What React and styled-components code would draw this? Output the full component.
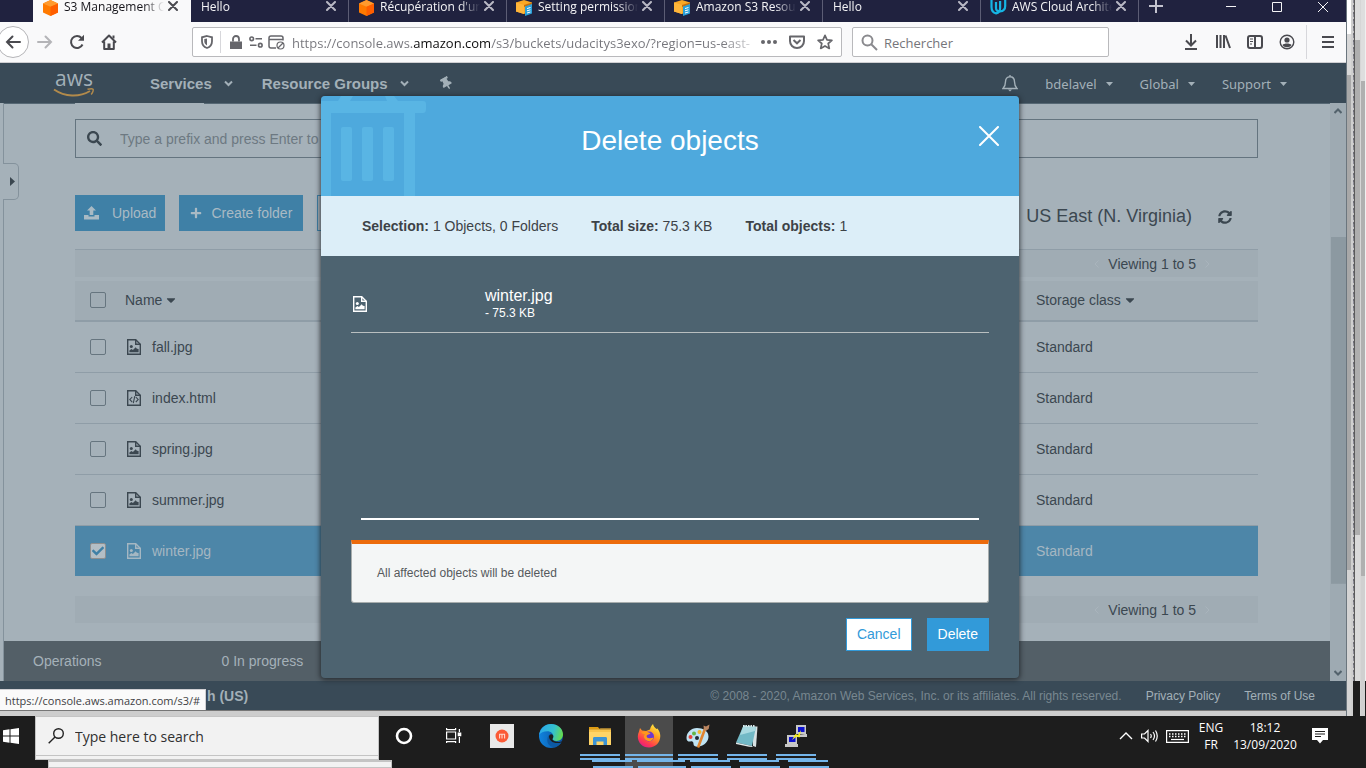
import React from "react";
import styled, { createGlobalStyle, css } from "styled-components";
import { FaSearch, FaPlus, FaCaretDown, FaCheck, FaSyncAlt, FaThumbtack } from "react-icons/fa";

const sans = '"Liberation Sans", Arial, sans-serif';
const system = '"Open Sans", "Noto Sans", sans-serif';
const ink = "#3b4750";
const rule = "#8f9da7";

const GlobalStyle = createGlobalStyle`
  *, *::before, *::after { box-sizing: border-box; }
  body { margin: 0; background: #1d1d1d; font-family: ${sans}; font-size: 14px; color: ${ink}; overflow: hidden; }
  button { padding: 0; border: 0; background: none; color: inherit; font: inherit; cursor: pointer; }
  a { color: inherit; text-decoration: none; }
  input { font: inherit; }
  svg { display: block; flex: none; }
  h2, p { margin: 0; font-weight: normal; }
`;

/* ---------- shared icon frame ---------- */

const Icon = ({ w = 16, h = w, box = `0 0 ${w} ${h}`, sw = 2, children, ...rest }) => (
  <svg width={w} height={h} viewBox={box} fill="none" stroke="currentColor" strokeWidth={sw} aria-hidden="true" {...rest}>
    {children}
  </svg>
);

const Cross = ({ size = 10, sw = 2 }) => (
  <Icon w={size} sw={sw} strokeLinecap="round">
    <path d={`M1 1 ${size - 1} ${size - 1}M${size - 1} 1 1 ${size - 1}`} />
  </Icon>
);

const Chevron = () => (
  <Icon w={9} h={7} sw={2}>
    <path d="M1 1.5 4.5 5 8 1.5" />
  </Icon>
);

const Triangle = () => (
  <Icon w={7} h={4} stroke="none" fill="currentColor">
    <path d="M0 0h7L3.5 4z" />
  </Icon>
);

const FileIcon = ({ kind }) => (
  <Icon w={14} h={16} sw={1.4}>
    <path d="M.7.7h8l4.6 4.6v10H.7z" />
    <path d="M8.7.7v4.6h4.6" />
    {kind === "html" ? (
      <path d="M5.2 7 2.8 9.6l2.4 2.4M8.8 7l2.4 2.6L8.8 12M7.8 6.2l-1.5 7" strokeWidth="1.1" />
    ) : (
      <g fill="currentColor" stroke="none">
        <circle cx="4.3" cy="7.4" r="1.5" />
        <path d="M2.4 13.2v-1.7l2-1.6 1.5 1 2.8-2.7 1.2 1.6 1.7.3v3.1z" />
      </g>
    )}
  </Icon>
);

const Cube = () => (
  <Icon w={17} h={16} stroke="none">
    <path d="M8.5 0 16 3.4v9L8.5 16 1 12.4v-9z" fill="#ff7a00" />
    <path d="M8.5 0 16 3.4 8.5 6.8 1 3.4z" fill="#ff9a2e" />
    <path d="M8.5 6.8 16 3.4v9L8.5 16z" fill="#ff5e00" />
  </Icon>
);

const DocsCube = () => (
  <Icon w={17} h={16} stroke="none">
    <path d="M8 0 16 2.6v8L8 14 0 11.5v-9z" fill="#f9a825" />
    <path d="M0 2.5 8 5v9L0 11.5z" fill="#ffb53a" />
    <path d="M8 5l8-2.4v2L8 7z" fill="#c46d0d" />
    <path d="M9 6.5 16 4v9.5L9 16z" fill="#2a9fd8" />
    <path d="M11 8.5l3.5-1M11 10.8l3.5-1M11 13l3.5-1" stroke="#fff" strokeWidth="1" />
  </Icon>
);

const UdacityMark = () => (
  <Icon w={17} h={16} sw={2.2} stroke="#16b5e4">
    <path d="M1.500 0v7c0 3.600 1.800 5.800 4.600 6.300 2.800-.5 4-2.300 4-5.300V1" />
    <path d="M6 2v6c0 2.400 1.400 3.600 4 3.400 3.200-.3 5.200-2 5.200-5.400V0" />
  </Icon>
);

/* ---------- desktop frame ---------- */

const Desktop = styled.div`
  display: flex;
  flex-direction: column;
  min-height: 100vh;
`;
const Stage = styled.div`
  flex: 1;
  display: flex;
`;
const Browser = styled.div`
  flex: 1;
  min-width: 0;
  display: flex;
  flex-direction: column;
  border-right: 1px solid #6b767e;
`;
const WindowShadow = styled.div`
  height: 6px;
  border-top: 1px solid #767676;
  background: #cdcdcd;
`;
const StackedEdges = styled.div`
  display: flex;
  align-items: flex-start;
  align-self: stretch;
  background: #1d1d1d;
`;
const Edge = styled.div`
  width: ${(p) => p.$w}px;
  align-self: stretch;
  margin-bottom: ${(p) => p.$up || 0}px;
  background: ${(p) => p.$bg};
`;

const edges = [
  { w: 4, bg: "linear-gradient(#fff 0 34px, #d8d8d8 34px 75px, #a8a8a8 75px 570px, #d4d4d4 570px)" },
  { w: 2, bg: "#cfcfcf" },
  { w: 1, up: 35, bg: "repeating-linear-gradient(#8b8b95 0 3px, #c6c6c6 3px 5px, #6f6f78 5px 7px)" },
  { w: 1, up: 35, bg: "#5a5a5a" },
  { w: 5, up: 35, bg: "linear-gradient(#dcdcdc 0 40px, #aeaeae 40px 535px, #dadada 535px)" },
  { w: 1, up: 0, bg: "#d6d6d6" },
  { w: 4, up: 0, bg: "linear-gradient(#dedede 0 81px, #b0b0b0 81px 576px, #d0d0d0 576px)" },
  { w: 1, up: 35, bg: "#f0f0f0" },
];

/* ---------- browser tabs ---------- */

const TabStrip = styled.header`
  display: flex;
  height: 22px;
  padding-left: 33px;
  background: #20223f;
  color: #f4f4f6;
  font: 12px/14px ${system};
`;
const Tab = styled.div`
  flex: 0 1 158px;
  min-width: 0;
  display: flex;
  align-items: flex-start;
  padding: 0 12px 0 9px;
  border-right: 1px solid ${(p) => (p.$active ? "transparent" : "#5c5d75")};
  color: ${(p) => (p.$active ? "#15141a" : "#f4f4f6")};
  background: ${(p) => (p.$active ? "#f9f9fa" : "none")};
`;
const TabTitle = styled.span`
  flex: 1;
  min-width: 0;
  margin: 0 4px 0 ${(p) => (p.$icon ? 5 : 1)}px;
  white-space: nowrap;
  mask-image: linear-gradient(to right, #000 calc(100% - 20px), transparent);
`;
const TabClose = styled.button`
  margin: 1px 0 0;
  color: ${(p) => (p.$active ? "#4a4a4f" : "#b9b9c4")};
`;
const NewTab = styled.button`
  width: 34px;
  height: 14px;
  display: grid;
  place-items: center;
  color: #c3c3cf;
`;
const WindowControls = styled.div`
  display: flex;
  margin-left: auto;
`;
const WindowButton = styled.button`
  width: 46px;
  height: 14px;
  display: grid;
  place-items: center;
`;

const tabs = [
  { title: "S3 Management C", icon: Cube, active: true },
  { title: "Hello" },
  { title: "Récupération d'un", icon: Cube },
  { title: "Setting permission", icon: DocsCube },
  { title: "Amazon S3 Resour", icon: DocsCube },
  { title: "Hello" },
  { title: "AWS Cloud Archite", icon: UdacityMark },
];

/* ---------- browser toolbar ---------- */

const Toolbar = styled.div`
  display: flex;
  align-items: center;
  height: 41px;
  padding-right: 2px;
  border-bottom: 1px solid #cfcfd2;
  background: #f9f9fa;
  color: #4a4a4f;
`;
const ToolButton = styled.button`
  width: 32px;
  height: 32px;
  display: grid;
  place-items: center;
  color: ${(p) => (p.$faint ? "#b4b4b7" : "inherit")};
`;
const BackButton = styled(ToolButton)`
  margin-left: -3px;
  border: 1px solid #b5b5b8;
  border-radius: 50%;
  background: #fff;
`;
const UrlBox = styled.div`
  flex: 636;
  display: flex;
  align-items: center;
  height: 30px;
  margin-left: 67px;
  padding: 0 6px;
  border: 1px solid #b9b9bc;
  border-radius: 2px;
  background: #fff;
  color: #66666b;
`;
const UrlGlyph = styled.span`
  display: grid;
  place-items: center;
  width: ${(p) => p.$w || 20}px;
`;
const UrlRule = styled.span`
  width: 1px;
  height: 22px;
  margin: 0 5px;
  background: #d7d7db;
`;
const UrlInput = styled.input`
  flex: 1;
  min-width: 0;
  margin-left: 6px;
  padding: 2px 0 0;
  border: 0;
  outline: 0;
  font: 13px/20px ${system};
  color: transparent;
  background: linear-gradient(to right, #75757b 121px, #0c0c0d 121px 199px, #75757b 199px 430px, #d8d8da 460px);
  background-clip: text;
`;
const FindBox = styled.label`
  flex: 239;
  display: flex;
  align-items: center;
  gap: 6px;
  height: 30px;
  margin: 0 66px 0 10px;
  padding: 0 8px;
  border: 1px solid #b9b9bc;
  border-radius: 2px;
  background: #fff;
  color: #8a8a8e;
`;
const FindInput = styled.input`
  flex: 1;
  min-width: 0;
  padding: 2px 0 0;
  border: 0;
  outline: 0;
  background: none;
  font: 13px/20px ${system};
  &::placeholder { color: #75757a; opacity: 1; }
`;
const ToolRule = styled.span`
  width: 1px;
  height: 34px;
  margin: 0 5px 0 3px;
  background: #d7d7db;
`;

/* ---------- AWS console header ---------- */

const Page = styled.div`
  position: relative;
  flex: 1;
  display: flex;
  flex-direction: column;
  background: #a5b1b9;
`;
const AwsHeader = styled.header`
  display: flex;
  align-items: center;
  height: 40px;
  padding: 1px 59px 0 53px;
  background: #394a57;
  color: #a3b0b8;
`;
const Logo = styled.a`
  width: 42px;
  height: 30px;
  margin-right: 55px;
  font: 500 21px/18px "Open Sans", sans-serif;
  text-align: center;
`;
const NavButton = styled.button`
  display: flex;
  align-items: center;
  gap: 12px;
  margin-right: ${(p) => p.$after || 29}px;
  font: bold 15px/20px ${sans};
`;
const AccountMenu = styled.nav`
  display: flex;
  align-items: center;
  gap: 27px;
  margin-left: auto;
`;
const AccountButton = styled.button`
  display: flex;
  align-items: center;
  gap: 9px;
  font: 13px/20px "Noto Sans", sans-serif;
`;

/* ---------- bucket page ---------- */

const Viewport = styled.div`
  flex: 1;
  display: flex;
`;
const Bucket = styled.main`
  position: relative;
  flex: 1;
  display: flex;
  flex-direction: column;
  margin-left: 3px;
  border-left: 1px solid #84929c;
`;
const TabRule = styled.div`
  display: grid;
  grid-template-columns: 71px 129px 1fr;
  height: 1px;
  & > i { background: #566874; }
  & > i:nth-child(2) { background: none; }
`;
const DrawerHandle = styled.button`
  position: absolute;
  left: -1px;
  top: 60px;
  width: 16px;
  height: 37px;
  border: 1px solid #84929c;
  border-left: 0;
  border-radius: 0 5px 5px 0;
  background: #a5b1b9;
  padding-left: 7px;
`;
const Sheet = styled.section`
  padding: 15px 72px 18px 71px;
`;
const PrefixBox = styled.label`
  display: flex;
  align-items: center;
  gap: 18px;
  height: 39px;
  padding: 0 11px;
  border: 1px solid #64747f;
`;
const PrefixInput = styled.input`
  flex: 1;
  padding: 0;
  border: 0;
  outline: 0;
  background: none;
  &::placeholder { color: #6d7982; opacity: 1; }
`;
const Actions = styled.div`
  display: flex;
  align-items: center;
  gap: 14px;
  margin: 37px 0 18px;
`;
const ActionButton = styled.button`
  display: flex;
  align-items: center;
  gap: ${(p) => p.$gap || 9}px;
  height: 36px;
  padding: 0 ${(p) => p.$pad || 11}px;
  background: #3f80a6;
  color: #a9bac4;
`;
const OutlineButton = styled(ActionButton)`
  width: 100px;
  border: 1px solid #3f80a6;
  background: none;
  color: #3f80a6;
`;
const Region = styled.span`
  margin-left: auto;
  font-size: 18px;
  line-height: 20px;
  padding-top: 6px;
`;
const RefreshButton = styled.button`
  margin: 8px 26px 0 12px;
`;
const Pager = styled.div`
  display: flex;
  align-items: center;
  justify-content: flex-end;
  gap: 9px;
  height: ${(p) => (p.$ruled ? 28 : 27)}px;
  margin: ${(p) => (p.$ruled ? "0 0 4px" : "20px 0 0")};
  padding-right: 48px;
  border-top: ${(p) => (p.$ruled ? `1px solid ${rule}` : "0")};
  background: #a0acb4;
`;
const PagerStep = styled.button`
  color: #a9b4bc;
`;
const ObjectTable = styled.table`
  width: 100%;
  table-layout: fixed;
  border-collapse: separate;
  border-spacing: 0;
  text-align: left;
`;
const HeadCell = styled.th`
  width: ${(p) => (p.$w ? `${p.$w}px` : "auto")};
  height: 41px;
  padding: 0 0 2px;
  border-bottom: 2px solid ${rule};
  background: #a0acb4;
  font-weight: normal;
`;
const SortButton = styled.button`
  display: flex;
  align-items: center;
  gap: 2px;
`;
const Row = styled.tr`
  ${(p) => p.$selected && css`
    background: #4d86a8;
    color: #a5b7c2;
  `}
`;
const Cell = styled.td`
  height: ${(p) => (p.$last ? 50 : 51)}px;
  padding: 0;
  border-bottom: ${(p) => (p.$last ? "0" : `1px solid ${rule}`)};
`;
const FileName = styled.a`
  display: flex;
  align-items: center;
  gap: 11px;
  padding-left: 2px;
`;
const Tick = styled.label`
  display: grid;
  width: 16px;
  margin-left: 15px;
  & > * { grid-area: 1 / 1; }
  & > svg { margin: 2px; color: #3f80a6; pointer-events: none; }
`;
const TickInput = styled.input`
  appearance: none;
  width: 16px;
  height: 16px;
  margin: 0;
  border: 1px solid #66757f;
  border-radius: 2px;
  &:checked { background: #b3bec5; border-color: #8f8f8f; }
`;
const Operations = styled.div`
  display: flex;
  align-items: center;
  gap: 120px;
  height: 40px;
  margin-top: auto;
  padding-left: 29px;
  background: #535f67;
  color: #a5b1b9;
`;
const ScrollTrack = styled.div`
  width: 16px;
  display: flex;
  flex-direction: column;
  align-items: center;
  justify-content: space-between;
  padding: 5px 0;
  background: linear-gradient(#8c99a1, #8c99a1) 1px 134px / 15px 60% no-repeat, #9eaab2;
  color: #53626c;
`;
const PageFooter = styled.footer`
  display: flex;
  align-items: center;
  height: 29px;
  padding: 0 31px 0 22px;
  background: #394a57;
  color: #a3b0b8;
  font-size: 12px;
`;
const FooterDot = styled.span`
  width: 14px;
  height: 14px;
  margin-right: ${(p) => p.$after}px;
  border-radius: 50%;
  background: #a3b0b8;
`;
const Language = styled.button`
  font: bold 14px/18px ${sans};
`;
const Copyright = styled.span`
  margin-left: auto;
  color: #788790;
`;
const FooterLink = styled.a`
  margin-left: 24px;
`;
const LinkStatus = styled.output`
  position: absolute;
  left: 0;
  bottom: 0;
  height: 21px;
  padding: 0 5px;
  border: 1px solid #d0d0d4;
  border-left: 0;
  border-bottom: 0;
  background: #fafafa;
  color: #3f3f44;
  font: 11px/21px ${system};
  white-space: nowrap;
`;

/* ---------- dialog ---------- */

const Overlay = styled.div`
  position: absolute;
  inset: 0;
  display: flex;
  justify-content: center;
  padding: 33px 6px 32px 0;
`;
const Dialog = styled.section`
  width: 698px;
  display: flex;
  flex-direction: column;
  overflow: hidden;
  border-radius: 4px;
  background: #4d6370;
  color: #fff;
  box-shadow: 0 1px 5px 1px rgba(25, 30, 34, 0.75);
`;
const DialogHeader = styled.header`
  position: relative;
  display: grid;
  grid-template-columns: 1fr auto 1fr;
  height: 100px;
  padding: 25px 20px 0;
  background: #4ea9dd;
  & > svg { position: absolute; left: 0; top: 0; }
`;
const DialogTitle = styled.h2`
  grid-column: 2;
  font-size: 28px;
  line-height: 40px;
`;
const DialogClose = styled.button`
  justify-self: end;
  align-self: start;
  margin-top: 5px;
`;
const Summary = styled.dl`
  display: flex;
  align-items: center;
  gap: 33px;
  height: 60px;
  margin: 0;
  padding: 0 41px;
  background: #dceef8;
  color: #3d4247;
`;
const SummaryItem = styled.div`
  display: flex;
  gap: 4px;
  & > dt { font-weight: bold; }
  & > dd { margin: 0; }
`;
const DialogBody = styled.div`
  flex: 1;
  display: flex;
  flex-direction: column;
  padding: 16px 30px 27px;
`;
const ObjectItem = styled.div`
  display: grid;
  grid-template-columns: 132px 1fr;
  align-items: center;
  height: 61px;
  padding: 4px 0 0 2px;
  border-bottom: 1px solid #b9bfc0;
`;
const ObjectName = styled.p`
  font-size: 16px;
  line-height: 18px;
`;
const ObjectSize = styled.p`
  font-size: 12px;
  line-height: 16px;
`;
const ListEnd = styled.div`
  height: 2px;
  margin: auto 10px 20px;
  background: #fff;
`;
const Notice = styled.p`
  height: 63px;
  padding: 21px 25px 0;
  border: 1px solid #a7adad;
  border-top: 4px solid #ec6b0c;
  border-radius: 0 0 3px 3px;
  background: #f4f6f6;
  color: #55595c;
  font-size: 12px;
  line-height: 16px;
`;
const DialogActions = styled.div`
  display: flex;
  justify-content: flex-end;
  gap: 15px;
  margin-top: 15px;
`;
const DialogButton = styled.button`
  height: 33px;
  padding: 0 10px 2px;
  border: 1px solid #329ad9;
  background: ${(p) => (p.$primary ? "#329ad9" : "#fff")};
  color: ${(p) => (p.$primary ? "#fff" : "#329ad9")};
`;

/* ---------- taskbar ---------- */

const Taskbar = styled.footer`
  display: flex;
  height: 52px;
  overflow: hidden;
  background: #1d1d1d;
  color: #fff;
`;
const StartButton = styled.button`
  width: 35px;
  height: 40px;
  padding-left: 3px;
`;
const SearchStack = styled.div`
  width: 357px;
  margin-right: -12px;
  display: flex;
  flex-direction: column;
`;
const TaskSearch = styled.label`
  display: flex;
  align-items: center;
  gap: 11px;
  width: 344px;
  height: 40px;
  padding: 0 12px;
  border: 1px solid #c4c4c4;
  background: #f2f2f2;
  color: #222;
`;
const TaskInput = styled.input`
  flex: 1;
  min-width: 0;
  padding: 2px 0 0;
  border: 0;
  outline: 0;
  background: none;
  font: 14px/20px ${system};
  &::placeholder { color: #303030; opacity: 1; }
`;
const SearchEcho = styled.span`
  width: 344px;
  height: ${(p) => p.$h}px;
  margin-left: ${(p) => p.$x}px;
  border: 1px solid #c4c4c4;
  border-top-width: ${(p) => p.$top || 0}px;
  background: #f2f2f2;
`;
const TaskApps = styled.div`
  display: flex;
  gap: 1px;
`;
const TaskApp = styled.button`
  position: relative;
  width: 48px;
  height: ${(p) => (p.$active ? 52 : 40)}px;
  padding-bottom: ${(p) => (p.$active ? 12 : 0)}px;
  display: grid;
  place-items: center;
  background: ${(p) => (p.$active ? "#4b4b4b" : "none")};
`;
const RunMark = styled.i`
  position: absolute;
  z-index: 1;
  left: ${(p) => p.$x}px;
  top: ${(p) => p.$y}px;
  width: ${(p) => p.$w || 40}px;
  height: 2px;
  background: #74b5ea;
`;
const Tray = styled.div`
  display: flex;
  align-items: center;
  gap: 8px;
  height: 40px;
  margin-left: auto;
  padding-right: 38px;
  font: 12px/17px ${system};
`;
const TrayText = styled.button`
  width: ${(p) => p.$w}px;
  text-align: center;
  white-space: nowrap;
`;
const NoticesButton = styled.button`
  margin-left: 7px;
`;

const apps = [
  {
    name: "Cortana",
    art: <Icon w={18} sw={2.6}><circle cx="9" cy="9" r="7" /></Icon>,
  },
  {
    name: "Task view",
    art: (
      <Icon w={18} sw={1.2}>
        <path d="M2.6 5h9v7h-9zM2 2.6h10M2.6 1v2M11.6 1v2M2 14.6h10M2.6 14v2M11.6 14v2M15.4 2v3M15.4 10v6" />
        <path d="M14.3 6h2.4v2.6h-2.4z" fill="currentColor" />
      </Icon>
    ),
  },
  {
    name: "Music",
    art: (
      <Icon w={24} stroke="none">
        <path d="M0 0h24v24H0z" fill="#e9e9e9" />
        <circle cx="12" cy="12" r="6.5" fill="#fb5a36" />
        <path d="M9.6 14.5v-4.3h5v4.3M12 10.2v4.3" stroke="#ffd9cf" strokeWidth="1.1" />
      </Icon>
    ),
  },
  {
    name: "Edge",
    art: (
      <Icon w={24} stroke="none">
        <defs>
          <linearGradient id="edgeTop" x1="0" x2="1" y1=".3" y2=".5">
            <stop offset="0" stopColor="#2aa7ea" /><stop offset=".6" stopColor="#35c1cd" /><stop offset="1" stopColor="#66dc4c" />
          </linearGradient>
          <linearGradient id="edgeLow" x1="0" x2="1"><stop offset="0" stopColor="#1083de" /><stop offset="1" stopColor="#0a4f9c" /></linearGradient>
        </defs>
        <circle cx="12" cy="12" r="12" fill="url(#edgeLow)" />
        <path d="M.2 10.8C1 4.5 5.900 0 12 0c6.800 0 12 4.600 12 10.300 0 4.100-2.900 6.700-6.400 6.700-2.700 0-4.200-1-4.200-1.900 0-.6.9-1.100.9-2.900 0-2.700-2.500-5-6-5C4.700 7.200 1.300 8.800.2 10.800z" fill="url(#edgeTop)" />
        <path d="M8.300 16.200c0 4.400 3.600 6.900 7.700 7l1.800-.7c2-1 3.700-2.600 4.700-4.300-1 .5-2.400.9-4 .9-4.700 0-8.500-2.700-8.500-6.300 0-1.100.5-2.100 1.500-2.700-1.800.4-3.200 2.700-3.200 6.100z" fill="#0c59a4" />
        <path d="M10 12.500c0 3.300 3 6.600 8.500 6.600 1.600 0 3-.4 4-.9.4-.6.2-1-.3-.8-1.200.5-2.600.7-4.600.4-3-.4-4.200-1.600-4.200-2.700 0-.6.9-1.100.9-2.900 0-1-.9-2-2-2-1.400 0-2.300 1-2.300 2.300z" fill="#1d1d1d" />
      </Icon>
    ),
  },
  {
    name: "File Explorer",
    running: true,
    art: (
      <Icon w={22} h={20} stroke="none">
        <path d="M0 1h9l2 2.500H0z" fill="#dd9b13" />
        <path d="M0 3.500h22V19H0z" fill="#ffd467" />
        <path d="M0 3h10l1.500-1H22v4H0z" fill="#f3b83b" opacity=".6" />
        <path d="M4 19v-6.500c0-1 .6-1.500 1.500-1.500h11c.9 0 1.500.5 1.500 1.500V19h-3.500v-3.500h-7V19z" fill="#3c93d4" />
      </Icon>
    ),
  },
  {
    name: "Firefox",
    running: true,
    active: true,
    art: (
      <Icon w={24} stroke="none">
        <defs>
          <linearGradient id="fox" x1=".8" x2=".2" y1="0" y2="1">
            <stop offset="0" stopColor="#fff044" /><stop offset=".4" stopColor="#ff9a1f" /><stop offset=".75" stopColor="#ff3b4e" /><stop offset="1" stopColor="#e0178c" />
          </linearGradient>
        </defs>
        <path d="M2 7.500 3 4l2 2.500L9 7l4-1.500c.4-2.300 1.400-4 3-5.500.6 2.500 2 3.500 3.500 5l1-.5c2 2.500 2.800 5 2.800 7.500C23.300 18.500 18.500 23.500 12 23.500S.8 18.600.8 12.500C.8 10.700 1.200 9 2 7.500z" fill="url(#fox)" />
        <circle cx="12" cy="12.500" r="5" fill="#6d38cf" />
        <path d="M4 8.500 9 7.300c2 .4 2.700 1.600 4.500 1.700-.4 1.800-3.500 1.500-3.800 2.800-.4 1.700 1 2.700 3.300 2.400 1.700-.2 3-1 3.500-.2-1 2.500-3 3.500-5.500 3-3.500-.8-5-4-3.500-6.500z" fill="#ff981c" />
      </Icon>
    ),
  },
  {
    name: "Paint",
    running: true,
    art: (
      <Icon w={24} stroke="none">
        <path d="M11 4C5 4 .5 8.500.5 14c0 3 2 4 4 3.500 2-.5 3 .5 3 2.500 0 2.500 3 3 5.500 2.500 5.500-1 9.500-5 9.500-10C22.500 7 17 4 11 4z" fill="#bfe3f3" />
        <circle cx="4.500" cy="13" r="2" fill="#e8433a" /><circle cx="8" cy="9.500" r="2" fill="#63b546" /><circle cx="13.500" cy="8" r="2" fill="#f4b72c" /><circle cx="11" cy="14" r="2" fill="#202a35" />
        <path d="M19 5 12 23.500" stroke="#e0842f" strokeWidth="2.600" />
        <path d="M18 6 17.500 1.500 20 2.500 23.500.5l-.8 4.500-3 2z" fill="#b98561" />
      </Icon>
    ),
  },
  {
    name: "Notepad",
    running: true,
    art: (
      <Icon w={24} stroke="none">
        <path d="M18 2.500h4.500L21 23l-3-1z" fill="#d8e1e3" />
        <path d="M8.500 1.500 21 3l-4 19L1 18.500z" fill="#72b9c6" />
        <path d="M8.500 1.500 21 3l-1 4L5 11z" fill="#a9d9e0" />
        <path d="M8 2h12" stroke="#d7e6e8" strokeWidth="2" strokeDasharray="1.500 1" />
        <path d="m1 18.500 16 3.500 1 1-4-.2L1 20z" fill="#dfe9ea" />
      </Icon>
    ),
  },
  {
    name: "PuTTY",
    running: true,
    art: (
      <Icon w={24} stroke="none">
        <path d="M12 1h10v9H12zM9 11.500 21 10h2v3H9zM3 11h10v9H3zM1 20h13v3H1z" fill="#c7c7c7" />
        <path d="M14 3h6.500v5H14zM5 13h6.500v5H5z" fill="#0d12cf" />
        <path d="m8 16 3.500-6 2.500 1 3-5-1.500 7.500-3-1z" fill="#f7ef1d" />
      </Icon>
    ),
  },
];

const files = [
  { name: "fall.jpg" },
  { name: "index.html", kind: "html" },
  { name: "spring.jpg" },
  { name: "summer.jpg" },
  { name: "winter.jpg", selected: true },
];

function Paging({ ruled }) {
  return (
    <Pager $ruled={ruled}>
      <PagerStep aria-label="Previous page"><Icon w={5} h={8} sw={1}><path d="M4.500.5 1 4l3.500 3.500" /></Icon></PagerStep>
      <span>Viewing 1 to 5</span>
      <PagerStep aria-label="Next page"><Icon w={5} h={8} sw={1}><path d="M.5.5 4 4 .5 7.500" /></Icon></PagerStep>
    </Pager>
  );
}

function BrowserTabs() {
  return (
    <TabStrip>
      {tabs.map(({ title, icon: Art, active }, i) => (
        <Tab key={i} $active={active}>
          {Art && <Art />}
          <TabTitle $icon={Boolean(Art)}>{title}</TabTitle>
          <TabClose $active={active} aria-label={`Close ${title}`}><Cross /></TabClose>
        </Tab>
      ))}
      <NewTab aria-label="New tab"><Icon w={14} sw={2}><path d="M7 0v13M0 6h14" /></Icon></NewTab>
      <WindowControls>
        <WindowButton aria-label="Minimise"><Icon w={10} sw={1}><path d="M0 4.500h10" /></Icon></WindowButton>
        <WindowButton aria-label="Maximise"><Icon w={10} sw={1}><path d="M.5.5h9v9h-9z" /></Icon></WindowButton>
        <WindowButton aria-label="Close window"><Icon w={10} sw={1}><path d="m0 0 10 10M10 0 0 10" /></Icon></WindowButton>
      </WindowControls>
    </TabStrip>
  );
}

function BrowserToolbar() {
  return (
    <Toolbar>
      <BackButton aria-label="Back"><Icon w={16} strokeLinecap="round"><path d="M15 8H2M7.500 2.500 2 8l5.500 5.500" /></Icon></BackButton>
      <ToolButton $faint aria-label="Forward"><Icon w={16} strokeLinecap="round"><path d="M1 8h13M8.500 2.500 14 8l-5.500 5.500" /></Icon></ToolButton>
      <ToolButton aria-label="Reload">
        <Icon w={16}><path d="M13.500 10.500A6 6 0 1 1 12.500 4" /><path d="M15 .8v6H9z" fill="currentColor" stroke="none" /></Icon>
      </ToolButton>
      <ToolButton aria-label="Home">
        <Icon w={16} strokeLinejoin="round"><path d="M1 8.500 8 1.500l7 7M3.200 7.500V15h9.600V7.500" /><path d="M8 9.500V15" strokeWidth="3" /><path d="M12.500 1.500v3" /></Icon>
      </ToolButton>
      <UrlBox>
        <UrlGlyph $w={16}><Icon w={12} h={14} sw={1.800}><path d="M6 1 11 2.300v4C11 9.500 9 12 6 13 3 12 1 9.500 1 6.300v-4z" /><path d="M6 3.500v7C4 9.500 3.300 8 3.300 6.300V4z" fill="currentColor" stroke="none" /></Icon></UrlGlyph>
        <UrlRule />
        <UrlGlyph><Icon w={12} h={14} sw={1.800}><path d="M3 6.500V4a3 3 0 0 1 6 0v2.500" /><path d="M0 6.500h12V14H0z" fill="currentColor" stroke="none" /></Icon></UrlGlyph>
        <UrlGlyph><Icon w={14} h={12} sw={1.600}><circle cx="2.700" cy="2.800" r="1.800" /><circle cx="11.300" cy="9.200" r="1.800" /><path d="M6.500 2.800H13M1 9.200h6.500" /></Icon></UrlGlyph>
        <UrlGlyph><Icon w={17} h={15} sw={1.500}><path d="M8 13H3a2 2 0 0 1-2-2V3a2 2 0 0 1 2-2h10a2 2 0 0 1 2 2v2.500M1 4.500h14" /><circle cx="12.500" cy="10.500" r="3.500" strokeWidth="1.200" /><path d="m10 13 5-5" strokeWidth="1.200" /></Icon></UrlGlyph>
        <UrlInput aria-label="Address" readOnly value="https://console.aws.amazon.com/s3/buckets/udacitys3exo/?region=us-east-" />
        <UrlGlyph><Icon w={16} h={4} stroke="none" fill="currentColor"><circle cx="2" cy="2" r="2" /><circle cx="8" cy="2" r="2" /><circle cx="14" cy="2" r="2" /></Icon></UrlGlyph>
        <UrlGlyph $w={36}><Icon w={16} h={14}><path d="M1 1.500h14V6c0 4-3 7-7 7S1 10 1 6z" strokeLinejoin="round" /><path d="M4.500 5 8 8.300 11.500 5" /></Icon></UrlGlyph>
        <UrlGlyph><Icon w={16} sw={1.700} strokeLinejoin="round"><path d="m8 1.300 2 4.500 4.900.5-3.700 3.200 1.100 4.900L8 11.900l-4.300 2.500 1.100-4.900L1.100 6.300 6 5.800z" /></Icon></UrlGlyph>
      </UrlBox>
      <FindBox>
        <Icon w={17}><circle cx="6.500" cy="6.500" r="5" /><path d="m10 10 6 6" /></Icon>
        <FindInput placeholder="Rechercher" aria-label="Rechercher" />
      </FindBox>
      <ToolButton aria-label="Downloads"><Icon w={16}><path d="M8 0v11M3 6.500l5 5 5-5M2 15h12" /></Icon></ToolButton>
      <ToolButton aria-label="Library"><Icon w={16}><path d="M2 1v13M5.500 1v13M9 1v13M10.500 1.500 15 14" /></Icon></ToolButton>
      <ToolButton aria-label="Sidebars"><Icon w={16} h={14}><rect x="1" y="1" width="14" height="12" rx="2" /><path d="M8 1v12" /><path d="M3 4h3M3 6.500h3M3 9h2" strokeWidth="1" /></Icon></ToolButton>
      <ToolButton aria-label="Account"><Icon w={16} sw={1.400}><circle cx="8" cy="8" r="6.800" /><circle cx="8" cy="6" r="2.600" fill="currentColor" stroke="none" /><path d="M3.500 11c1.500-2 7.500-2 9 0-1.500 3-7.500 3-9 0z" fill="currentColor" stroke="none" /></Icon></ToolButton>
      <ToolRule />
      <ToolButton aria-label="Open menu"><Icon w={14} h={14}><path d="M1 2h12M1 7h12M1 12h12" /></Icon></ToolButton>
    </Toolbar>
  );
}

function ConsoleHeader() {
  return (
    <AwsHeader>
      <Logo href="#" aria-label="AWS home">
        aws
        <Icon w={42} h={10} stroke="#b28a4b" sw={2}>
          <path d="M1 2.500c11 7.500 25 8 36 1.500" />
          <path d="M34.500 2.300c3-.8 5-.7 5.500-.1.500.8-.4 3.300-1.800 5.300" strokeWidth="1.500" />
        </Icon>
      </Logo>
      <NavButton>Services <Chevron /></NavButton>
      <NavButton $after={31}>Resource Groups <Chevron /></NavButton>
      <button aria-label="Edit shortcuts"><FaThumbtack size={13} transform="rotate(-30)" /></button>
      <AccountMenu>
        <button aria-label="Notifications">
          <Icon w={16} h={17} sw={1.400}><path d="M8 1.800c-3 0-4.500 2-4.500 5C3.500 10.500 2.500 12 1 13.500h14c-1.500-1.500-2.500-3-2.500-6.700 0-3-1.500-5-4.500-5zM8 0v2" /><path d="M6 14.500h4l-2 2z" fill="currentColor" stroke="none" /></Icon>
        </button>
        <AccountButton>bdelavel <Triangle /></AccountButton>
        <AccountButton>Global <Triangle /></AccountButton>
        <AccountButton>Support <Triangle /></AccountButton>
      </AccountMenu>
    </AwsHeader>
  );
}

function ObjectList() {
  return (
    <ObjectTable>
      <thead>
        <tr>
          <HeadCell $w={50}><Tick><TickInput type="checkbox" aria-label="Select all" /></Tick></HeadCell>
          <HeadCell><SortButton>Name <FaCaretDown size={14} /></SortButton></HeadCell>
          <HeadCell $w={222}><SortButton>Storage class <FaCaretDown size={14} /></SortButton></HeadCell>
        </tr>
      </thead>
      <tbody>
        {files.map((f) => (
          <Row key={f.name} $selected={f.selected}>
            <Cell $last={f.selected}>
              <Tick>
                <TickInput type="checkbox" defaultChecked={f.selected} aria-label={`Select ${f.name}`} />
                {f.selected && <FaCheck size={12} />}
              </Tick>
            </Cell>
            <Cell $last={f.selected}><FileName href="#"><FileIcon kind={f.kind} />{f.name}</FileName></Cell>
            <Cell $last={f.selected}>Standard</Cell>
          </Row>
        ))}
      </tbody>
    </ObjectTable>
  );
}

function DeleteDialog() {
  return (
    <Overlay>
      <Dialog role="dialog" aria-labelledby="dialog-title">
        <DialogHeader>
          <Icon w={106} h={100} fill="#59b5e4" stroke="none">
            <path d="M20 0h12l-3 5H17zM64 0h9l4 5H66zM0 5h102q3 0 3 3v5q0 4-3 4H0zM0 16h10v84H0zM83 16h11v84H83z" />
            <rect x="20" y="31" width="11" height="54" rx="2" /><rect x="41" y="31" width="11" height="54" rx="2" /><rect x="62" y="31" width="11" height="54" rx="2" />
          </Icon>
          <DialogTitle id="dialog-title">Delete objects</DialogTitle>
          <DialogClose aria-label="Close"><Cross size={20} sw={2} /></DialogClose>
        </DialogHeader>
        <Summary>
          <SummaryItem><dt>Selection:</dt><dd>1 Objects, 0 Folders</dd></SummaryItem>
          <SummaryItem><dt>Total size:</dt><dd>75.3 KB</dd></SummaryItem>
          <SummaryItem><dt>Total objects:</dt><dd>1</dd></SummaryItem>
        </Summary>
        <DialogBody>
          <ObjectItem>
            <FileIcon />
            <div>
              <ObjectName>winter.jpg</ObjectName>
              <ObjectSize>- 75.3 KB</ObjectSize>
            </div>
          </ObjectItem>
          <ListEnd />
          <Notice>All affected objects will be deleted</Notice>
          <DialogActions>
            <DialogButton>Cancel</DialogButton>
            <DialogButton $primary>Delete</DialogButton>
          </DialogActions>
        </DialogBody>
      </Dialog>
    </Overlay>
  );
}

function SystemTaskbar() {
  return (
    <Taskbar>
      <StartButton aria-label="Start">
        <Icon w={16} stroke="none" fill="currentColor"><path d="M0 2.300 6.500 1.300v6.200H0zM7.500 1.200 16 0v7.500H7.500zM0 8.500h6.500v6.200L0 13.800zM7.500 8.500H16V16l-8.500-1.200z" /></Icon>
      </StartButton>
      <SearchStack>
        <TaskSearch>
          <Icon w={16} sw={1.400}><circle cx="10.500" cy="5.500" r="4.800" /><path d="M7 9 .7 15.300" /></Icon>
          <TaskInput placeholder="Type here to search" aria-label="Type here to search" />
        </TaskSearch>
        <SearchEcho $h={4} $x={0} />
        <SearchEcho $h={8} $x={13} $top={2} />
      </SearchStack>
      <TaskApps>
        {apps.map((app) => (
          <TaskApp key={app.name} $active={app.active} aria-label={app.name}>
            {app.art}
            {app.running && (
              <>
                <RunMark $x={app.active ? 0 : 4} $y={38} $w={app.active ? 48 : 40} />
                <RunMark $x={app.active ? 0 : 4} $y={42} $w={app.active ? 48 : 40} />
                <RunMark $x={app.active ? 12 : 16} $y={44} $w={app.active ? 48 : 40} />
                <RunMark $x={app.active ? 13 : 17} $y={50} $w={app.active ? 48 : 40} />
              </>
            )}
          </TaskApp>
        ))}
      </TaskApps>
      <Tray>
        <button aria-label="Hidden icons"><Icon w={14} h={8} sw={1.400}><path d="m1 7 6-6 6 6" /></Icon></button>
        <button aria-label="Volume"><Icon w={17} h={14} sw={1.200}><path d="M.6 5h2.900L7 1.500v11L3.500 9H.6zM9.500 5q1.500 2 0 4M12 3q3 4 0 8M14.500 1.500q3.500 5.500 0 11" /></Icon></button>
        <button aria-label="Touch keyboard"><Icon w={23} h={13} sw={1.200}><path d="M.6.6h21.800v11.800H.6z" /><path d="M3 4h17M3 6.500h17" strokeDasharray="1.500 1.500" strokeWidth="1.500" /><path d="M5 9.500h13" /></Icon></button>
        <TrayText $w={28}>ENG<br />FR</TrayText>
        <TrayText $w={64}>18:12<br />13/09/2020</TrayText>
        <NoticesButton aria-label="Notifications"><Icon w={16} h={16} stroke="none"><path d="M0 0h16v12H11l-3 3.500L5 12H0z" fill="#fff" /><path d="M3 3.500h10M3 6h10M3 8.500h6" stroke="#1d1d1d" strokeWidth="1" /></Icon></NoticesButton>
      </Tray>
    </Taskbar>
  );
}

export default function App() {
  return (
    <Desktop>
      <GlobalStyle />
      <Stage>
        <Browser>
          <BrowserTabs />
          <BrowserToolbar />
          <Page>
            <ConsoleHeader />
            <Viewport>
              <Bucket>
                <TabRule><i /><i /><i /></TabRule>
                <DrawerHandle aria-label="Open drawer"><Icon w={5} h={9} stroke="none" fill="currentColor"><path d="M0 0v9l5-4.500z" /></Icon></DrawerHandle>
                <Sheet>
                  <PrefixBox>
                    <FaSearch size={15} />
                    <PrefixInput placeholder="Type a prefix and press Enter to search." aria-label="Prefix" />
                  </PrefixBox>
                  <Actions>
                    <ActionButton $gap={13} $pad={9}>
                      <Icon w={15} h={14} stroke="none" fill="currentColor"><path d="M7.500 0 12 4.500H9.300V9H5.700V4.500H3zM0 9h4.500v1.500h6V9H15v4.500H0z" /></Icon>
                      Upload
                    </ActionButton>
                    <ActionButton><FaPlus size={12} />Create folder</ActionButton>
                    <OutlineButton aria-label="Download" />
                    <Region>US East (N. Virginia)</Region>
                    <RefreshButton aria-label="Refresh"><FaSyncAlt size={14} /></RefreshButton>
                  </Actions>
                  <Paging ruled />
                  <ObjectList />
                  <Paging />
                </Sheet>
                <Operations><span>Operations</span><span>0 In progress</span></Operations>
              </Bucket>
              <ScrollTrack aria-hidden="true">
                <Icon w={8} h={6} sw={2}><path d="M.5 5 4 1.500 7.500 5" /></Icon>
                <Icon w={8} h={6} sw={2}><path d="M.5 1 4 4.500 7.500 1" /></Icon>
              </ScrollTrack>
            </Viewport>
            <PageFooter>
              <FooterDot $after={102} />
              <FooterDot $after={55} />
              <Language aria-label="English (US)">h (US)</Language>
              <Copyright>© 2008 - 2020, Amazon Web Services, Inc. or its affiliates. All rights reserved.</Copyright>
              <FooterLink href="#">Privacy Policy</FooterLink>
              <FooterLink href="#">Terms of Use</FooterLink>
            </PageFooter>
            <DeleteDialog />
            <LinkStatus>https://console.aws.amazon.com/s3/#</LinkStatus>
          </Page>
          <WindowShadow />
        </Browser>
        <StackedEdges aria-hidden="true">
          {edges.map((e, i) => <Edge key={i} $w={e.w} $up={e.up} $bg={e.bg} />)}
        </StackedEdges>
      </Stage>
      <SystemTaskbar />
    </Desktop>
  );
}
